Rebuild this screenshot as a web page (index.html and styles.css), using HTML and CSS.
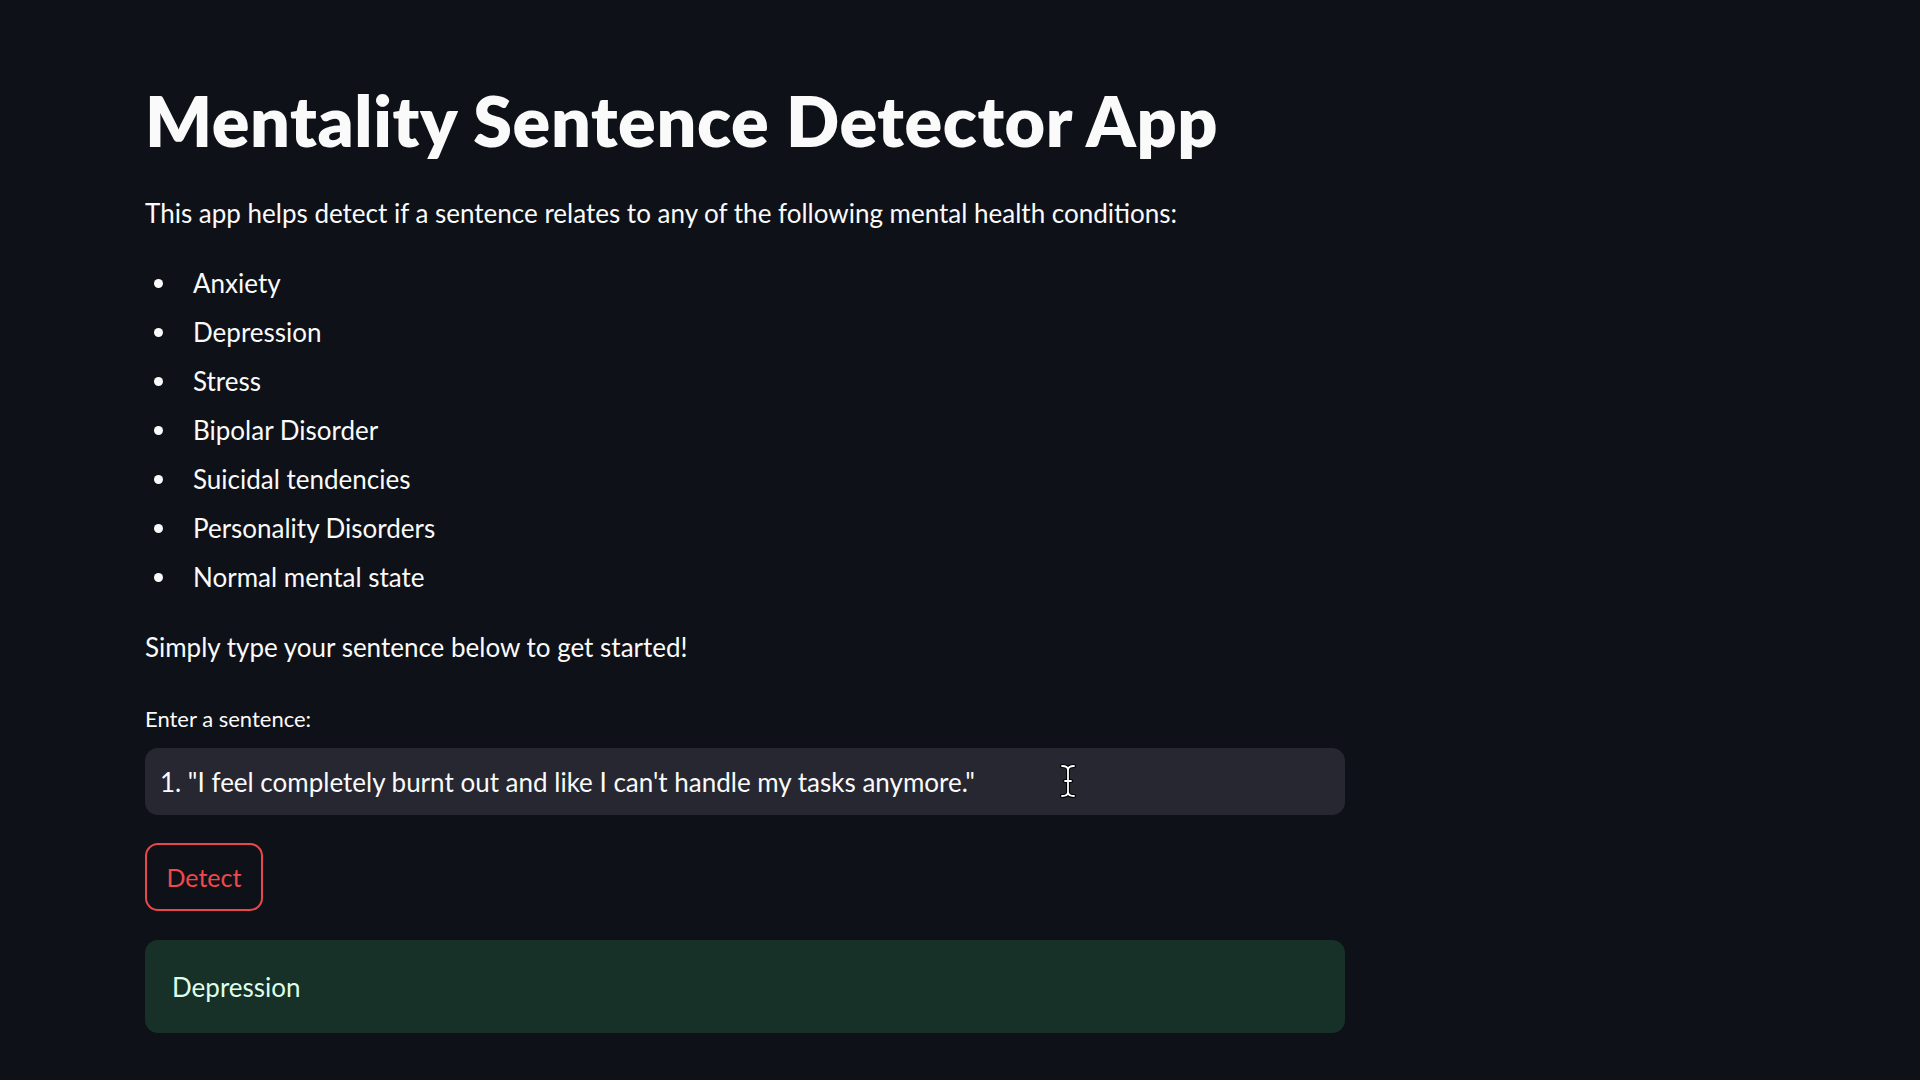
FILE: index.html
```html
<!DOCTYPE html>
<html lang="en">
<head>
<meta charset="utf-8">
<title>Mentality Sentence Detector App</title>
<link rel="stylesheet" href="styles.css">
</head>
<body>
<main class="app">
  <h1 class="title">Mentality Sentence Detector App</h1>
  <p class="para intro">This app helps detect if a sentence relates to any of the following mental health conditions:</p>
  <ul class="conditions">
    <li>Anxiety</li>
    <li>Depression</li>
    <li>Stress</li>
    <li>Bipolar Disorder</li>
    <li>Suicidal tendencies</li>
    <li>Personality Disorders</li>
    <li>Normal mental state</li>
  </ul>
  <p class="para start">Simply type your sentence below to get started!</p>
  <label class="label" for="sentence">Enter a sentence:</label>
  <div class="input-wrap">
    <input id="sentence" class="input" type="text" value="1. &quot;I feel completely burnt out and like I can't handle my tasks anymore.&quot;">
    <svg class="ibeam" width="18" height="34" viewBox="0 0 18 34" aria-hidden="true">
      <path d="M3 2 Q9 2 9 6 Q9 2 15 2 M9 6 V28 M3 32 Q9 32 9 28 Q9 32 15 32 M6 17 H12" fill="none" stroke="#000" stroke-width="4" stroke-linecap="round"/>
      <path d="M3 2 Q9 2 9 6 Q9 2 15 2 M9 6 V28 M3 32 Q9 32 9 28 Q9 32 15 32 M6 17 H12" fill="none" stroke="#fff" stroke-width="1.8" stroke-linecap="round"/>
    </svg>
  </div>
  <button class="btn" type="button">Detect</button>
  <div class="result">Depression</div>
</main>
</body>
</html>
```
FILE: styles.css
```css
* { box-sizing: border-box; }
html, body {
  margin: 0;
  padding: 0;
  background: #0e1117;
  color: #fafafa;
  font-family: "Lato", "Open Sans", sans-serif;
}
.app {
  width: 1200px;
  margin-left: 145px;
  padding-top: 77px;
  display: flex;
  flex-direction: column;
  align-items: flex-start;
}
.title {
  margin: 0;
  font-size: 70px;
  font-weight: 800;
  line-height: 86px;
  letter-spacing: 0.6px;
}
.para {
  margin: 0;
  font-size: 26px;
  line-height: 42px;
}
.intro { margin-top: 29px; }
.conditions {
  list-style: none;
  margin: 28px 0 0 0;
  padding: 0;
  font-size: 26px;
  line-height: 42px;
}
.conditions li {
  display: flex;
  align-items: center;
  margin-bottom: 7px;
}
.conditions li:last-child { margin-bottom: 0; }
.conditions li::before {
  content: "";
  width: 9px;
  height: 9px;
  border-radius: 50%;
  background: #fafafa;
  margin-left: 9px;
  margin-right: 30px;
  flex: none;
}
.start { margin-top: 28px; }
.label {
  margin-top: 33px;
  font-size: 22px;
  line-height: 36px;
}
.input-wrap {
  position: relative;
  width: 1200px;
  margin-top: 11px;
}
.input {
  display: block;
  width: 100%;
  height: 67px;
  border: none;
  outline: none;
  border-radius: 13px;
  background: #262730;
  color: #fafafa;
  font-family: inherit;
  font-size: 26px;
  padding: 0 15px;
}
.ibeam {
  position: absolute;
  left: 914px;
  top: 16px;
}
.btn {
  margin-top: 28px;
  width: 118px;
  height: 68px;
  border: 2px solid #e8484c;
  border-radius: 13px;
  background: transparent;
  color: #f0484c;
  font-family: inherit;
  font-size: 25px;
  padding: 0;
}
.result {
  margin-top: 29px;
  width: 1200px;
  height: 93px;
  display: flex;
  align-items: center;
  padding: 0 27px;
  border-radius: 13px;
  background: #173028;
  color: #dffde9;
  font-size: 26px;
}
```
